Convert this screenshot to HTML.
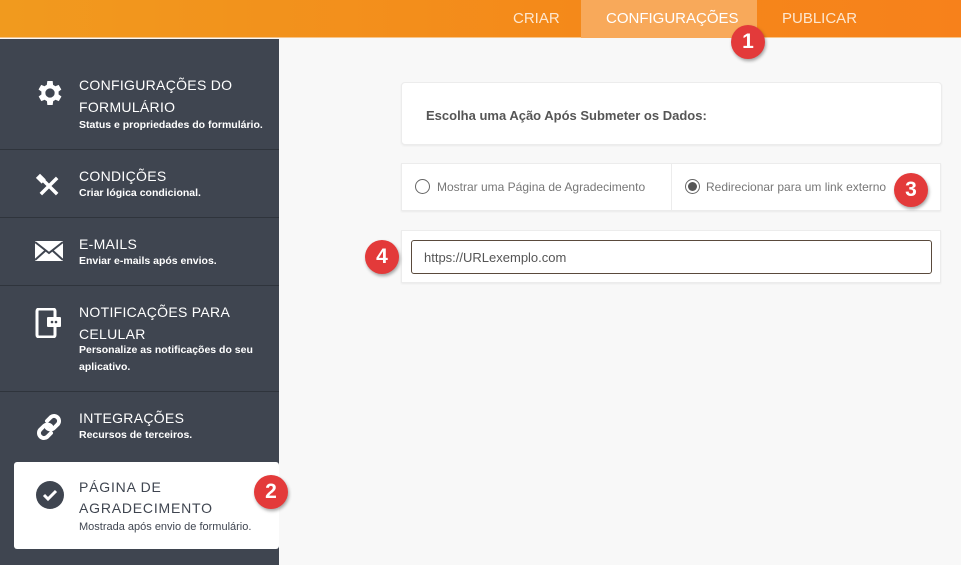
<!DOCTYPE html>
<html><head><meta charset="utf-8"><style>
*{margin:0;padding:0;box-sizing:border-box}
body{width:961px;height:565px;overflow:hidden;background:#f8f8f8;font-family:"Liberation Sans",sans-serif;position:relative}
.hdr{position:absolute;left:0;top:0;width:961px;height:38px;background:linear-gradient(90deg,#f19a1e,#f4891a 60%,#f7811b);border-bottom:1px solid #f7c58a}
.tab{position:absolute;top:0;height:38px;line-height:38px;color:#fde7cf;font-size:15px}
.side{position:absolute;left:0;top:39px;width:279px;height:526px;background:#3f4550}
.item{position:absolute;left:0;width:279px;border-bottom:1px solid #2f343c;color:#fff}
.t{position:absolute;left:79px;font-size:14px;letter-spacing:.3px;line-height:22px}
.s{position:absolute;left:79px;font-size:10.5px;font-weight:bold;line-height:17px}
.ic{position:absolute;left:34px}
.badge{position:absolute;width:34px;height:34px;border-radius:50%;background:#e33a3a;color:#fff;font-weight:bold;font-size:21px;text-align:center;line-height:34px;box-shadow:1px 2px 3px rgba(0,0,0,.35)}
.card{position:absolute;background:#fff;border:1px solid #ececec;box-shadow:0 1px 2px rgba(0,0,0,.06)}
</style></head><body>
<div class="hdr">
<div class="tab" style="left:513px">CRIAR</div>
<div style="position:absolute;left:581px;top:0;width:176px;height:38px;background:#f8a95a"></div>
<div class="tab" style="left:606px;color:#fff">CONFIGURAÇÕES</div>
<div class="tab" style="left:782px">PUBLICAR</div>
</div>
<div class="side">
<div class="item" style="top:0;height:111px">
<svg class="ic" style="top:38px" width="32" height="32" viewBox="0 0 24 24"><path fill="#fff" d="M19.4 13a7.5 7.5 0 000-2l2.1-1.6-2-3.5-2.5 1a7 7 0 00-1.7-1L15 3h-4l-.4 2.9a7 7 0 00-1.7 1l-2.5-1-2 3.5L6.6 11a7.5 7.5 0 000 2l-2.1 1.6 2 3.5 2.5-1a7 7 0 001.7 1L11 21h4l.4-2.9a7 7 0 001.7-1l2.5 1 2-3.5zM13 15.5a3.5 3.5 0 110-7 3.5 3.5 0 010 7z" transform="translate(-1 0)"/></svg>
<div class="t" style="top:35px">CONFIGURAÇÕES DO<br>FORMULÁRIO</div>
<div class="s" style="top:78px">Status e propriedades do formulário.</div>
</div>
<div class="item" style="top:111px;height:68px">
<svg class="ic" style="top:22px" width="30" height="28" viewBox="0 0 24 24"><path stroke="#fff" stroke-width="3" d="M5 5l14 14M19 5L5 19"/><rect x="2" y="3" width="7" height="5" fill="#fff" transform="rotate(45 5 5)"/></svg>
<div class="t" style="top:15px">CONDIÇÕES</div>
<div class="s" style="top:35px">Criar lógica condicional.</div>
</div>
<div class="item" style="top:179px;height:68px">
<svg class="ic" style="top:22px" width="30" height="22" viewBox="0 0 30 22"><rect x="1" y="1" width="28" height="20" fill="#fff"/><path d="M1 2l14 11L29 2M1 20l10-9M29 20L19 11" stroke="#3f4550" stroke-width="2" fill="none"/></svg>
<div class="t" style="top:15px">E-MAILS</div>
<div class="s" style="top:35px">Enviar e-mails após envios.</div>
</div>
<div class="item" style="top:247px;height:106px">
<svg class="ic" style="top:22px" width="30" height="30" viewBox="0 0 30 30"><rect x="3" y="1" width="18" height="28" rx="2" fill="none" stroke="#fff" stroke-width="3"/><rect x="13" y="9" width="14" height="10" rx="1" fill="#fff"/><circle cx="18" cy="14" r="1.3" fill="#3f4550"/><circle cx="22" cy="14" r="1.3" fill="#3f4550"/></svg>
<div class="t" style="top:15px">NOTIFICAÇÕES PARA<br>CELULAR</div>
<div class="s" style="top:56px">Personalize as notificações do seu<br>aplicativo.</div>
</div>
<div class="item" style="top:353px;height:70px;border:none">
<svg class="ic" style="top:20px" width="30" height="30" viewBox="0 0 30 30"><g fill="none" stroke="#fff" stroke-width="4" stroke-linecap="round"><path d="M13 9l4-4a5 5 0 017 7l-4 4a5 5 0 01-7 0"/><path d="M17 21l-4 4a5 5 0 01-7-7l4-4a5 5 0 017 0"/></g></svg>
<div class="t" style="top:15px">INTEGRAÇÕES</div>
<div class="s" style="top:35px">Recursos de terceiros.</div>
</div>
</div>
<div style="position:absolute;left:14px;top:462px;width:265px;height:87px;background:#fff;border-radius:3px"></div>
<svg style="position:absolute;left:35px;top:480px" width="30" height="30" viewBox="0 0 30 30"><circle cx="15" cy="15" r="14" fill="#3f4550"/><path d="M9 15l4 4 8-8" stroke="#fff" stroke-width="3" fill="none"/></svg>
<div style="position:absolute;left:79px;top:477px;font-size:14px;letter-spacing:.8px;line-height:21px;color:#3f4550">PÁGINA DE<br>AGRADECIMENTO</div>
<div style="position:absolute;left:79px;top:521px;font-size:11px;color:#3f4550">Mostrada após envio de formulário.</div>
<div class="badge" style="left:254px;top:475px">2</div>

<div class="card" style="left:401px;top:82px;width:541px;height:63px;border-radius:4px"><div style="position:absolute;left:24px;top:25px;font-size:13px;font-weight:bold;color:#555">Escolha uma Ação Após Submeter os Dados:</div></div>
<div class="card" style="left:401px;top:163px;width:540px;height:48px">
<div style="position:absolute;left:269px;top:0;width:1px;height:46px;background:#ececec"></div>
<div style="position:absolute;left:13px;top:15px;width:15px;height:15px;border:1px solid #666;border-radius:50%"></div>
<div style="position:absolute;left:35px;top:16px;font-size:12px;color:#777">Mostrar uma Página de Agradecimento</div>
<div style="position:absolute;left:283px;top:15px;width:15px;height:15px;border:1px solid #666;border-radius:50%"><div style="margin:2px;width:9px;height:9px;border-radius:50%;background:#555"></div></div>
<div style="position:absolute;left:304px;top:16px;font-size:12px;color:#777">Redirecionar para um link externo</div>
</div>
<div class="card" style="left:401px;top:230px;width:540px;height:53px">
<div style="position:absolute;left:9px;top:9px;width:521px;height:34px;border:1px solid #5a4a3c;border-radius:3px;font-size:13px;color:#555;padding:9px 0 0 12px">https://URLexemplo.com</div>
</div>
<div class="badge" style="left:731px;top:25px">1</div>
<div class="badge" style="left:894px;top:173px">3</div>
<div class="badge" style="left:365px;top:240px">4</div>
</body></html>
